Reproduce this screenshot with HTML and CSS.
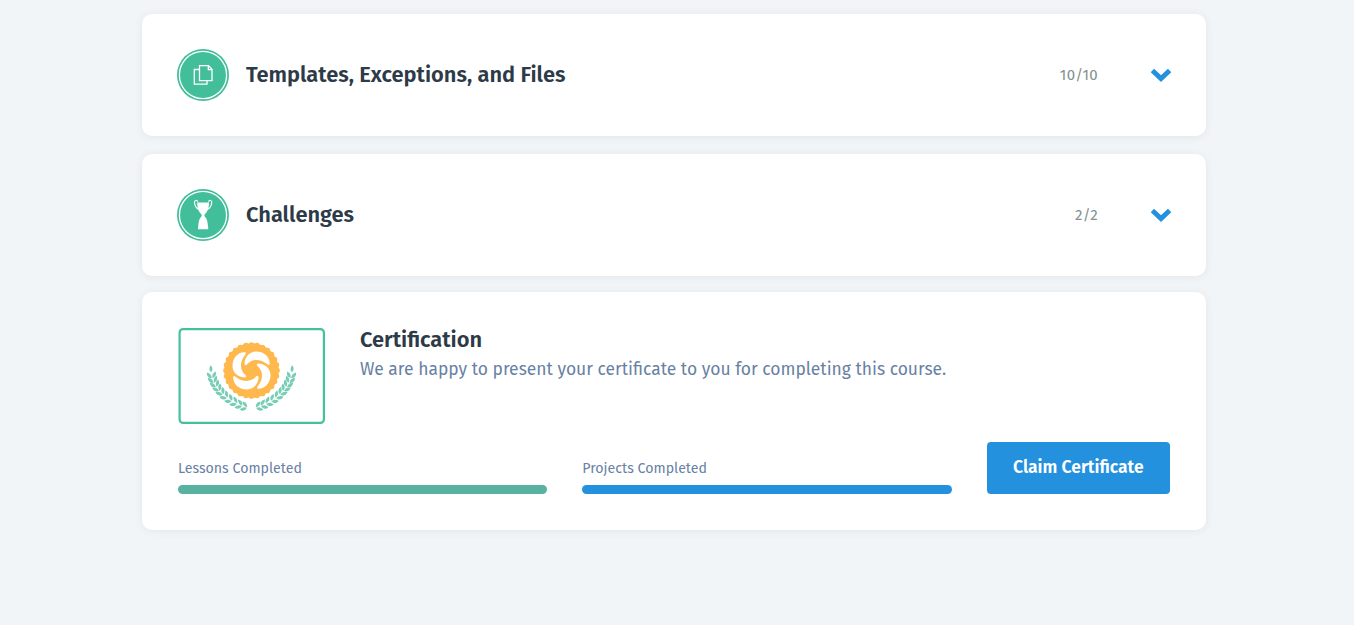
FILE: index.html
```
<!DOCTYPE html>
<html lang="en">
<head>
<meta charset="utf-8">
<title>Course</title>
<link rel="stylesheet" href="styles.css">
</head>
<body>
<main class="course">
  <section class="card topic">
    <svg class="badge" viewBox="0 0 52 52" aria-hidden="true">
      <circle cx="26" cy="26" r="26" fill="#42be9b"/>
      <circle cx="26" cy="26" r="23.6" fill="none" stroke="#fff" stroke-width="1.3"/>
      <g fill="none" stroke="#fff" stroke-width="1.3">
        <path d="M22.5 20.500h-5.200v14.700h12.700v-3.500"/>
        <path d="M22.500 16.600h9l3.500 3.700v11.400H22.500zM31.300 16.600v4H35"/>
      </g>
    </svg>
    <h2 class="title">Templates, Exceptions, and Files</h2>
    <span class="count">10/10</span>
    <svg class="chevron" viewBox="0 0 22 14" aria-hidden="true"><path d="M2.400 2.400 11 10.600 19.600 2.400"/></svg>
  </section>
  <section class="card topic">
    <svg class="badge" viewBox="0 0 52 52" aria-hidden="true">
      <circle cx="26" cy="26" r="26" fill="#42be9b"/>
      <circle cx="26" cy="26" r="23.6" fill="none" stroke="#fff" stroke-width="1.3"/>
      <path fill="#fff" d="M20.2 13.500h11.800c0 6-1.500 9.200-3.800 11.200-1 .9-1 2.200 0 3.200 1.800 2 2.200 4 2.700 8.300v1.200h.3v2.800H21v-2.800h.3v-1.200c.5-4.300.9-6.300 2.700-8.300 1-1 1-2.300 0-3.200-2.300-2-3.800-5.200-3.800-11.200z"/>
      <path fill="none" stroke="#fff" stroke-width="1.200" d="M20.700 12.800c-.7-2-3.700-1.800-3.200 1 .3 2.700 1.800 5.700 4.500 6.700M31.500 12.800c.7-2 3.700-1.800 3.200 1-.3 2.700-1.800 5.700-4.500 6.700"/>
    </svg>
    <h2 class="title">Challenges</h2>
    <span class="count">2/2</span>
    <svg class="chevron" viewBox="0 0 22 14" aria-hidden="true"><path d="M2.400 2.400 11 10.600 19.600 2.400"/></svg>
  </section>
  <section class="card certification">
    <div class="intro">
      <svg class="certificate" viewBox="-73.500 -42.500 147 96" aria-hidden="true">
        <defs>
          <path id="pair" d="M-.2 3.600C-4.300 3-4.900 0-4.300-2.700-1.300 -1.500.1.600-.2 3.600zM.5 3.600C.2.600 1.500-1.700 4.500-2.500 5.200.2 3.900 2.900.5 3.600z"/>
          <g id="laurel">
            <path d="M-40.300 1.800c-2.500-2-2.300-4.500-.5-7 2.200 2.300 2.300 4.900.5 7z"/>
            <use href="#pair" transform="translate(-40 4) rotate(-8)"/>
            <use href="#pair" transform="translate(-38.700 8.800) rotate(-14)"/>
            <use href="#pair" transform="translate(-36.700 13.100) rotate(-22)"/>
            <use href="#pair" transform="translate(-34.200 17.300) rotate(-30)"/>
            <use href="#pair" transform="translate(-31 21.200) rotate(-38)"/>
            <use href="#pair" transform="translate(-27.200 25) rotate(-46)"/>
            <use href="#pair" transform="translate(-22.700 28.500) rotate(-54)"/>
            <use href="#pair" transform="translate(-17.800 31.500) rotate(-61)"/>
            <use href="#pair" transform="translate(-12.800 34) rotate(-67)"/>
            <use href="#pair" transform="translate(-8 36) rotate(-72)"/>
          </g>
          <path id="petal" d="M-6.500-18.200C-14-18.500-19-12-19-4.500-19 1.500-14 6.500-7.500 7-5.500 7.200-4.500 6-6 4.600-11.500 0-12.500-8-6.200-16-5.200-17.200-5.400-18.200-6.500-18.200z"/>
        </defs>
        <rect x="-71.900" y="-41.400" width="144.300" height="93.800" rx="3.500" fill="#fff" stroke="#43c09c" stroke-width="2.200"/>
        <g fill="#78ceb5">
          <use href="#laurel"/>
          <use href="#laurel" transform="scale(-1 1)"/>
        </g>
        <circle r="27.300" fill="#ffb84d"/>
        <circle r="25.700" fill="none" stroke="#ffb84d" stroke-width="5.300" stroke-linecap="round" pathLength="280" stroke-dasharray="0 10"/>
        <g fill="#fff">
          <use href="#petal"/>
          <use href="#petal" transform="rotate(90)"/>
          <use href="#petal" transform="rotate(180)"/>
          <use href="#petal" transform="rotate(270)"/>
        </g>
      </svg>
      <div class="copy">
        <h2 class="title">Certification</h2>
        <p class="message">We are happy to present your certificate to you for completing this course.</p>
      </div>
    </div>
    <div class="progress-row">
      <div class="progress">
        <span class="label">Lessons Completed</span>
        <div class="bar lessons"></div>
      </div>
      <div class="progress">
        <span class="label">Projects Completed</span>
        <div class="bar projects"></div>
      </div>
      <button class="claim">Claim Certificate</button>
    </div>
  </section>
</main>
</body>
</html>
```
FILE: styles.css
```
* { box-sizing: border-box; }
body {
  margin: 0;
  min-height: 625px;
  background: #f1f5f8;
  color: #2d3a48;
  font-family: "Fira Sans", "Open Sans", "Noto Sans", sans-serif;
}
.course { width: 1064px; margin-left: 142px; padding-top: 14px; }
.card {
  background: #fff;
  border-radius: 10px;
  box-shadow: 0 1px 9px rgba(45, 65, 75, 0.08);
}
.topic {
  display: flex;
  align-items: center;
  height: 122px;
  padding: 0 34px 0 35px;
  margin-bottom: 18px;
}
.badge { width: 52px; height: 52px; margin-right: 17px; }
.title { margin: 0; font-size: 21.84px; line-height: 30px; font-weight: 600; white-space: nowrap; }
.count { margin: -1px 0 0 auto; font-size: 15px; line-height: 20px; letter-spacing: 0.3px; color: #82918f; }
.chevron { width: 22px; height: 14px; margin-left: 52px; }
.chevron path { fill: none; stroke: #2491df; stroke-width: 4.8; }
.certification { height: 238px; margin-top: -2px; padding: 36px; }
.intro { display: flex; gap: 35px; height: 96px; }
.certificate { width: 147px; height: 96px; flex: none; }
.copy { margin-top: -3px; }
.message { margin: 1px 0 0; font-size: 17.46px; line-height: 28px; color: #6881a3; white-space: nowrap; }
.progress-row { display: flex; align-items: flex-end; gap: 35px; height: 70px; }
.progress { width: 369.33px; flex: none; }
.label { display: block; height: 26px; font-size: 14.18px; line-height: 20px; color: #6881a3; }
.bar { height: 9px; border-radius: 5px; }
.lessons { background: #58b2a1; }
.projects { background: #2491df; }
.claim {
  width: 183.34px;
  flex: none;
  height: 52px;
  padding: 0 0 2px;
  border: 0;
  border-radius: 4px;
  background: #2491df;
  color: #fff;
  font: 600 17.5px "Fira Sans", "Open Sans", "Noto Sans", sans-serif;
  white-space: nowrap;
}
```
